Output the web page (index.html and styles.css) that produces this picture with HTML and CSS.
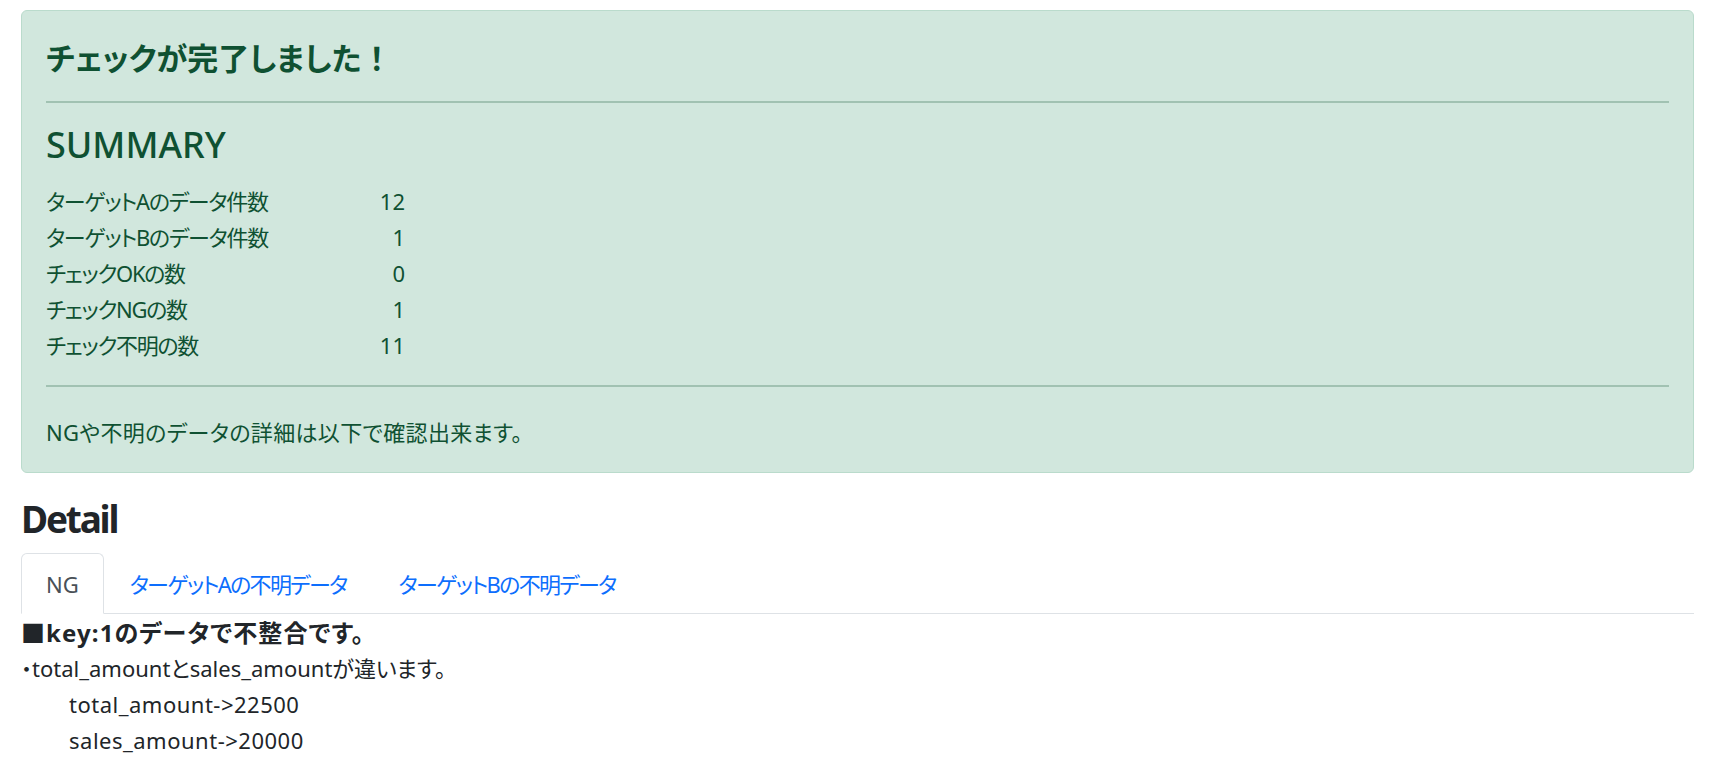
FILE: index.html
```html
<!DOCTYPE html>
<html lang="ja">
<head>
<meta charset="utf-8">
<title>Check result</title>
<link rel="stylesheet" href="styles.css">
</head>
<body>
<div class="container">
  <div class="alert">
    <h4 class="alert-heading">チェックが完了しました<span class="bang">！</span></h4>
    <hr class="sep sep-top">
    <h2 class="summary-title">SUMMARY</h2>
    <div class="summary">
      <div class="row"><span class="label">ターゲットAのデータ件数</span><span class="num">12</span></div>
      <div class="row"><span class="label">ターゲットBのデータ件数</span><span class="num">1</span></div>
      <div class="row"><span class="label">チェックOKの数</span><span class="num">0</span></div>
      <div class="row"><span class="label">チェックNGの数</span><span class="num">1</span></div>
      <div class="row"><span class="label">チェック不明の数</span><span class="num">11</span></div>
    </div>
    <hr class="sep sep-bottom">
    <p class="note">NGや不明のデータの詳細は以下で確認出来ます。</p>
  </div>

  <h2 class="detail-title">Detail</h2>
  <ul class="tabs">
    <li class="tab active">NG</li>
    <li class="tab">ターゲットAの不明データ</li>
    <li class="tab">ターゲットBの不明データ</li>
  </ul>
  <div class="tab-body">
    <div class="line key">■key:1のデータで不整合です。</div>
    <div class="line">・total_amountとsales_amountが違います。</div>
    <div class="line indent">total_amount-&gt;22500</div>
    <div class="line indent">sales_amount-&gt;20000</div>
  </div>
</div>
</body>
</html>
```
FILE: styles.css
```css
* { box-sizing: border-box; }
html, body { margin: 0; padding: 0; background: #fff; }
body {
  font-family: "Noto Sans", "Noto Sans CJK JP", sans-serif;
  font-size: 22px;
  line-height: 36px;
  color: #212529;
  font-feature-settings: "palt";
}
.container {
  padding: 10px 20px 0 21px;
}
.alert {
  background: #d1e7dd;
  border: 1px solid #badbcc;
  border-radius: 6px;
  color: #0f5132;
  padding: 15px 24px 22px 24px;
}
.alert-heading {
  margin: 13px 0 0 0;
  font-size: 31px;
  font-weight: 700;
  line-height: 38px;
  white-space: nowrap;
}
.bang { font-feature-settings: normal; }
.sep {
  border: 0;
  border-top: 2px solid #a1c2b2;
  margin: 0;
}
.sep-top { margin-top: 24px; }
.sep-bottom { margin-top: 22px; }
.summary-title {
  margin: 18px 0 0 0;
  font-size: 36px;
  font-weight: 500;
  line-height: 48px;
}
.summary { margin-top: 14px; }
.row {
  display: grid;
  grid-template-columns: 280px 79px;
  line-height: 36px;
  white-space: nowrap;
}
.label { letter-spacing: -1.3px; }
.num { text-align: right; }
.note { margin: 27px 0 0 0; line-height: 36px; white-space: nowrap; letter-spacing: 0.35px; }

.detail-title {
  margin: 22px 0 10px 0;
  font-size: 37px;
  font-weight: 700;
  letter-spacing: -2.2px;
  line-height: 48px;
  color: #212529;
}
.tabs {
  list-style: none;
  margin: 0;
  padding: 0;
  display: flex;
  border-bottom: 1px solid #dee2e6;
}
.tab {
  padding: 12px 25px 11px 25px;
  line-height: 36px;
  color: #0d6efd;
  border: 1px solid transparent;
  border-top-left-radius: 6px;
  border-top-right-radius: 6px;
  margin-bottom: -1px;
  letter-spacing: -1.7px;
  white-space: nowrap;
}
.tab.active {
  color: #495057;
  background: #fff;
  border-color: #dee2e6 #dee2e6 #fff;
  letter-spacing: 0;
  padding-left: 24px;
  padding-right: 24px;
}
.tab-body { padding-top: 2px; }
.line { line-height: 36px; white-space: nowrap; }
.key { font-weight: 700; font-size: 24px; letter-spacing: 1.1px; line-height: 34px; }
.indent { padding-left: 48px; letter-spacing: 0.5px; }
```
